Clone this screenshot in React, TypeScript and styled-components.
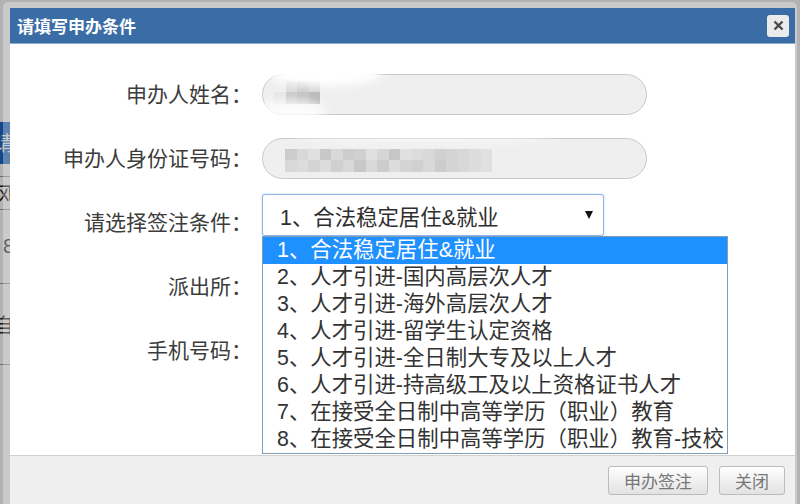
import React from 'react'
import styled, { createGlobalStyle } from 'styled-components'

const GlobalStyle = createGlobalStyle`
  html, body {
    margin: 0;
    padding: 0;
    width: 800px;
    height: 504px;
    overflow: hidden;
  }
  body {
    font-family: "Liberation Sans", "Noto Sans CJK SC", sans-serif;
    background: #fff;
  }
`

const Page = styled.div`
  position: relative;
  width: 800px;
  height: 504px;
  overflow: hidden;
  background: #fff;
`

const SideTable = styled.div`
  width: 10px;
  padding-top: 122px;
  display: flex;
  flex-direction: column;
`

const SideCell = styled.div<{ $h: number; $blue?: boolean }>`
  height: ${({ $h }) => $h}px;
  display: flex;
  justify-content: flex-end;
  align-items: center;
  overflow: hidden;
  font-size: 20px;
  color: ${({ $blue }) => ($blue ? '#fff' : '#222')};
  background: ${({ $blue }) => ($blue ? '#1a66c4' : 'transparent')};
  border-bottom: 1px solid ${({ $blue }) => ($blue ? 'transparent' : '#999')};
  white-space: nowrap;
  margin-right: -4px;
`

const Mask = styled.div`
  position: absolute;
  inset: 0;
  background: rgba(0, 0, 0, 0.3);
`

const Window = styled.div`
  position: absolute;
  left: 3px;
  top: 2px;
  width: 794px;
  height: 540px;
  box-sizing: border-box;
  padding: 6px 2px 0 7px;
  border-radius: 5px;
  background: rgba(255, 255, 255, 0.32);
`

const Dialog = styled.div`
  height: 100%;
  display: flex;
  flex-direction: column;
  background: #fff;
`

const TitleBar = styled.div`
  height: 36px;
  flex: none;
  box-sizing: border-box;
  display: flex;
  align-items: center;
  justify-content: space-between;
  padding: 0 6px 0 7px;
  background: #3a6da6;
  border-bottom: 1px solid #8eaacb;
  color: #fff;
  font-size: 17px;
  font-weight: bold;
`

const CloseButton = styled.button`
  width: 22px;
  height: 22px;
  padding: 0;
  display: flex;
  align-items: center;
  justify-content: center;
  border: none;
  border-radius: 3px;
  background: #ebebeb;
`

const Body = styled.div`
  height: 411px;
  flex: none;
  box-sizing: border-box;
  padding-top: 18px;
`

const Form = styled.div`
  display: grid;
  grid-template-columns: 242px auto;
  grid-auto-rows: 64px;
  column-gap: 10px;
  align-items: center;
`

const Label = styled.div`
  text-align: right;
  font-size: 21px;
  line-height: 1;
  color: #3c3c3c;
`

const Field = styled.div`
  position: relative;
  width: 385px;
  height: 41px;
`

const Pill = styled.div`
  width: 100%;
  height: 100%;
  box-sizing: border-box;
  border: 1px solid #c9c9c9;
  border-radius: 21px;
  background: #efefef;
`

const Mosaic = styled.div<{ $cols: number; $x: number; $y: number }>`
  position: absolute;
  left: ${({ $x }) => $x}px;
  top: ${({ $y }) => $y}px;
  display: grid;
  grid-template-columns: repeat(${({ $cols }) => $cols}, 11.5px);
  grid-auto-rows: 11.5px;
`

const Haze = styled.div<{ $x: number; $y: number; $w: number; $h: number; $o: number }>`
  position: absolute;
  left: ${({ $x }) => $x}px;
  top: ${({ $y }) => $y}px;
  width: ${({ $w }) => $w}px;
  height: ${({ $h }) => $h}px;
  border-radius: 50%;
  background: #fff;
  opacity: ${({ $o }) => $o};
  filter: blur(5px);
`

const SelectWrap = styled.div`
  position: relative;
  align-self: start;
  margin-top: 4px;
  width: 342px;
  height: 42px;
  z-index: 2;
`

const SelectBox = styled.div`
  height: 42px;
  box-sizing: border-box;
  display: flex;
  align-items: center;
  justify-content: space-between;
  padding: 0 10px 0 17px;
  border: 1px solid #8fb3e6;
  border-radius: 3px;
  box-shadow: 0 0 2px rgba(90, 150, 230, 0.45);
  background: #fff;
  font-size: 21.4px;
  color: #2e2e2e;
  white-space: nowrap;
`

const Caret = styled.span`
  width: 0;
  height: 0;
  border-left: 4px solid transparent;
  border-right: 4px solid transparent;
  border-top: 8px solid #111;
`

const OptionList = styled.div`
  position: absolute;
  top: 42px;
  left: 0;
  width: 466px;
  box-sizing: border-box;
  border: 1px solid #7f9db9;
  background: #fff;
`

const Option = styled.div<{ $active?: boolean }>`
  height: 27px;
  line-height: 27px;
  padding-left: 14px;
  font-size: 21.4px;
  white-space: nowrap;
  color: ${({ $active }) => ($active ? '#fff' : '#333')};
  background: ${({ $active }) => ($active ? '#1e90ff' : 'transparent')};
`

const Footer = styled.div`
  flex: 1;
  display: flex;
  justify-content: flex-end;
  align-items: flex-start;
  gap: 11px;
  padding: 10px 10px 0;
  border-top: 1px solid #d0d0d0;
  background: #efefef;
`

const FooterButton = styled.button`
  height: 29px;
  padding: 0 15px;
  font-family: inherit;
  font-size: 17px;
  color: #777;
  border: 1px solid #bcbcbc;
  border-radius: 3px;
  background: linear-gradient(#ffffff, #e2e2e2);
`

const options = [
  '1、合法稳定居住&就业',
  '2、人才引进-国内高层次人才',
  '3、人才引进-海外高层次人才',
  '4、人才引进-留学生认定资格',
  '5、人才引进-全日制大专及以上人才',
  '6、人才引进-持高级工及以上资格证书人才',
  '7、在接受全日制中高等学历（职业）教育',
  '8、在接受全日制中高等学历（职业）教育-技校',
]

// blurred name / id number, grey levels of each mosaic cell
const nameCells = ['', 'dcdcdc', 'cfcfcf', 'd6d6d6', 'e6e6e6', 'c9c9c9', 'c2c2c2', 'b9b9b9']
const idTop = ['cc', 'd8', 'e0', 'c8', 'd8', 'cc', 'd0', 'e0', 'd6', 'c6', 'e0', 'dc', 'd8', 'd0', 'd4', 'd8', 'dc', 'e0']
const idBottom = ['d8', 'dc', 'd4', 'dc', 'd0', 'd8', 'c8', 'd8', 'cc', 'dc', 'd4', 'd0', 'd8', 'cc', 'd4', 'd8', 'dc', 'e0']
const idCells = [...idTop, ...idBottom].map((v) => v + v + v)

function Cells({ list }: { list: string[] }) {
  return (
    <>
      {list.map((c, i) => (
        <span key={i} style={{ background: c ? `#${c}` : 'transparent' }} />
      ))}
    </>
  )
}

export default function App() {
  return (
    <Page>
      <GlobalStyle />
      <SideTable>
        <SideCell $h={41} $blue>请</SideCell>
        <SideCell $h={12} />
        <SideCell $h={32}>风</SideCell>
        <SideCell $h={73}>8</SideCell>
        <SideCell $h={80}>自</SideCell>
      </SideTable>
      <Mask />
      <Window>
        <Dialog>
          <TitleBar>
            请填写申办条件
            <CloseButton>
              <svg width="11" height="11" viewBox="0 0 11 11">
                <path d="M1.5 1.5 L9.5 9.5 M9.5 1.5 L1.5 9.5" stroke="#4a4a4a" strokeWidth="2.4" />
              </svg>
            </CloseButton>
          </TitleBar>
          <Body>
            <Form>
              <Label>申办人姓名：</Label>
              <Field>
                <Pill />
                <Mosaic $cols={4} $x={12} $y={7}>
                  <Cells list={nameCells} />
                </Mosaic>
                <Haze $x={8} $y={-12} $w={112} $h={24} $o={1} />
                <Haze $x={-6} $y={26} $w={70} $h={22} $o={0.8} />
              </Field>

              <Label>申办人身份证号码：</Label>
              <Field>
                <Pill />
                <Mosaic $cols={18} $x={23} $y={11}>
                  <Cells list={idCells} />
                </Mosaic>
                <Haze $x={30} $y={-6} $w={260} $h={10} $o={0.6} />
              </Field>

              <Label>请选择签注条件：</Label>
              <SelectWrap>
                <SelectBox>
                  {options[0]}
                  <Caret />
                </SelectBox>
                <OptionList>
                  {options.map((o, i) => (
                    <Option key={o} $active={i === 0}>
                      {o}
                    </Option>
                  ))}
                </OptionList>
              </SelectWrap>

              <Label>派出所：</Label>
              <Field>
                <Pill />
              </Field>

              <Label>手机号码：</Label>
              <Field>
                <Pill />
              </Field>
            </Form>
          </Body>
          <Footer>
            <FooterButton>申办签注</FooterButton>
            <FooterButton>关闭</FooterButton>
          </Footer>
        </Dialog>
      </Window>
    </Page>
  )
}
